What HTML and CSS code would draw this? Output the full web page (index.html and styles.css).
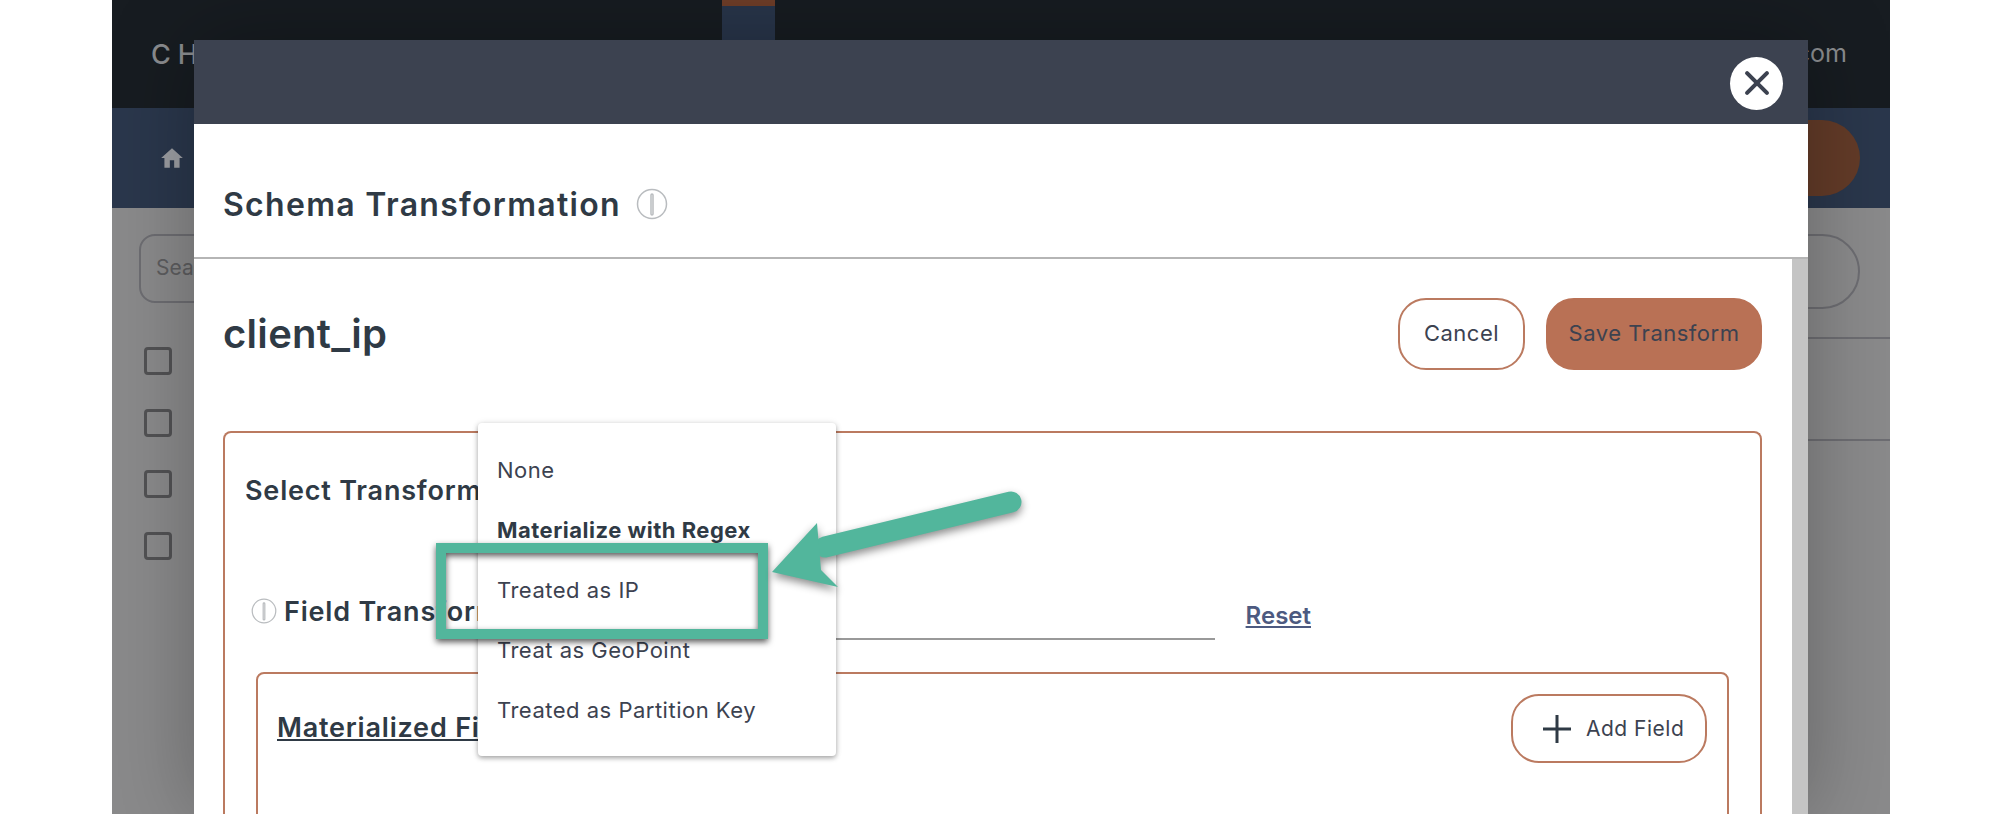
FILE: index.html
```html
<!DOCTYPE html>
<html lang="en">
<head>
    <meta charset="UTF-8">
    <title>Schema Transformation</title>
    <link rel="stylesheet" href="styles.css">
</head>
<body>
    <div class="page">
        <header class="topbar">
            <span class="brand">CHAOSSEARCH</span>
            <span class="tab-mark"></span>
            <span class="account">support@chaossearch.com</span>
        </header>
        <nav class="navbar">
            <svg class="home" viewBox="0 0 24 24"><path d="M10 21v-7h4v7h5v-9h3L12 3 2 12h3v9z"/></svg>
            <span class="nav-pill"></span>
        </nav>
        <main class="content">
            <div class="search-row">
                <div class="search">Search</div>
                <div class="search-right"></div>
            </div>
            <div class="check-row"><span class="check"></span></div>
            <div class="check-row"><span class="check"></span></div>
            <div class="check-row"><span class="check"></span></div>
            <div class="check-row"><span class="check"></span></div>
        </main>

        <section class="modal">
            <div class="modal-head">
                <button class="close">
                    <svg viewBox="0 0 24 24"><path d="M5 5l14 14M19 5L5 19"/></svg>
                </button>
            </div>
            <div class="modal-title">
                <h2>Schema Transformation</h2>
                <svg class="info info-lg" viewBox="0 0 32 32"><circle cx="16" cy="16" r="14.5"/><rect x="15" y="6" width="2" height="21" rx="1"/></svg>
            </div>
            <div class="modal-body">
                <div class="modal-scroll">
                    <div class="field-head">
                        <h1>client_ip</h1>
                        <div class="actions">
                            <button class="btn btn-cancel">Cancel</button>
                            <button class="btn btn-save">Save Transform</button>
                        </div>
                    </div>
                    <div class="panel">
                        <h3 class="select-label">Select Transformation</h3>
                        <div class="transform-row">
                            <svg class="info" viewBox="0 0 32 32"><circle cx="16" cy="16" r="14.5"/><rect x="15" y="6" width="2" height="21" rx="1"/></svg>
                            <h3>Field Transformation</h3>
                            <div class="transform-input"></div>
                            <a class="reset">Reset</a>
                        </div>
                        <div class="inner-panel">
                            <h3 class="materialized">Materialized Fields</h3>
                            <button class="btn btn-add">
                                <svg viewBox="0 0 28 28"><path d="M14 0v28M0 14h28"/></svg>
                                Add Field
                            </button>
                        </div>
                    </div>
                </div>
                <div class="scrollbar"></div>
            </div>
        </section>

        <ul class="menu">
            <li>None</li>
            <li class="selected">Materialize with Regex</li>
            <li>Treated as IP</li>
            <li>Treat as GeoPoint</li>
            <li>Treated as Partition Key</li>
        </ul>

        <div class="callout-box"></div>
        <svg class="callout-arrow" viewBox="0 0 280 120">
            <path d="M241 22L55 67"/>
            <polygon points="2,92 47,43 51,90 68,107"/>
        </svg>
    </div>
</body>
</html>
```

FILE: styles.css
```css
*{
    padding: 0;
    margin: 0;
    box-sizing: border-box;
    font-family: "Inter", "Open Sans", sans-serif;
}
body{
    background-color: #fff;
    overflow: hidden;
}
.page{
    position: relative;
    width: 1778px;
    height: 814px;
    margin-left: 112px;
    overflow: hidden;
    background-color: #8a8a8b;
}

/* page behind the modal */
.topbar{
    height: 108px;
    background-color: #171c21;
    display: flex;
    align-items: center;
    padding: 0 43px 0 39px;
    color: #8a8c8f;
}
.brand{
    width: 571px;
    font-size: 27px;
    letter-spacing: 7px;
    font-weight: 500;
}
.account{
    margin-left: auto;
    font-size: 25px;
    margin-bottom: 2px;
}
.tab-mark{
    width: 53px;
    align-self: stretch;
    background-color: #28354a;
    border-top: 6px solid #6e3d28;
}
.navbar{
    height: 100px;
    background-color: #2a374c;
    display: flex;
    justify-content: space-between;
    align-items: center;
    padding: 0 30px 0 47px;
}
.home{
    width: 26px;
    height: 26px;
    fill: #9c9ea3;
}
.nav-pill{
    width: 200px;
    height: 76px;
    border-radius: 38px;
    background-color: #633b28;
}
.content{
    padding: 26px 30px 0 27px;
    position: relative;
}
.search-row{
    display: flex;
    justify-content: space-between;
    align-items: flex-start;
    margin-bottom: 38px;
}
.search{
    width: 400px;
    height: 69px;
    border: 2px solid #6d6d72;
    border-radius: 16px;
    padding: 19px 15px;
    font-size: 21px;
    color: #5d5d5f;
}
.search-right{
    width: 300px;
    height: 75px;
    border: 2px solid #6d6d72;
    border-radius: 38px;
}
.check-row{
    height: 61.6px;
    padding-left: 5px;
}
.check{
    display: block;
    width: 28px;
    height: 28px;
    border: 3.5px solid #525254;
    border-radius: 4px;
}
.content::after{
    content: "";
    position: absolute;
    top: 129px;
    right: 0;
    width: 300px;
    height: 100px;
    border-top: 2px solid #6d6d72;
    border-bottom: 2px solid #6d6d72;
}

/* modal */
.modal{
    position: absolute;
    left: 82px;
    top: 40px;
    bottom: 0;
    width: 1614px;
    background-color: #fff;
    display: flex;
    flex-direction: column;
    box-shadow: 0 0 80px rgba(0, 0, 0, 0.28);
}
.modal-head{
    height: 84px;
    background-color: #3c4250;
    display: flex;
    justify-content: flex-end;
    align-items: center;
    padding: 2px 25px 0 0;
}
.close{
    width: 53px;
    height: 53px;
    border-radius: 50%;
    border: none;
    background-color: #fff;
    display: flex;
    align-items: center;
    justify-content: center;
}
.close svg{
    width: 34px;
    height: 34px;
    fill: none;
    stroke: #3c4250;
    stroke-width: 2.9;
    stroke-linecap: round;
}
.modal-title{
    height: 135px;
    display: flex;
    align-items: center;
    gap: 15px;
    padding: 27px 29px 0;
    border-bottom: 2px solid #b5b5b5;
}
h1, h2, h3{
    color: #2f3a45;
    font-weight: 600;
    white-space: nowrap;
}
h2{
    font-size: 32px;
    letter-spacing: 1.3px;
}
h1{
    font-size: 40px;
    letter-spacing: 0.3px;
    margin-bottom: 2px;
}
h3{
    font-size: 27px;
    letter-spacing: 0.8px;
}
.info{
    width: 26px;
    height: 26px;
    fill: none;
    stroke: #b9bcbf;
    stroke-width: 1.5;
    flex-shrink: 0;
}
.info-lg{
    width: 32px;
    height: 32px;
}
.modal-body{
    flex: 1;
    display: flex;
    overflow: hidden;
}
.modal-scroll{
    flex: 1;
    min-width: 0;
    padding: 39px 30px 0 29px;
}
.scrollbar{
    width: 16px;
    background-color: #c4c4c4;
}
.field-head{
    display: flex;
    justify-content: space-between;
    align-items: center;
}
.actions{
    display: flex;
    gap: 21px;
}
.btn{
    height: 72px;
    padding-bottom: 2px;
    background-color: #fff;
    border: 2px solid #bb7a60;
    border-radius: 28px;
    font-size: 22px;
    letter-spacing: 0.5px;
    color: #3c4250;
}
.btn-cancel{
    width: 127px;
}
.btn-save{
    width: 216px;
    background-color: #b97155;
    border-color: #b97155;
}
.panel{
    margin-top: 61px;
    border: 2px solid #bb7a60;
    border-bottom: none;
    border-radius: 8px 8px 0 0;
    padding: 40px 31px 0 31px;
    height: 400px;
}
.select-label{
    margin-left: -11px;
    line-height: 36px;
}
.transform-row{
    display: flex;
    align-items: center;
    height: 58px;
    margin-top: 73px;
}
.transform-row .info{
    margin-left: -5px;
    margin-right: 7px;
}
.transform-input{
    width: 720px;
    height: 58px;
    margin-left: auto;
    border-bottom: 2px solid #999;
}
.reset{
    margin: 8px 418px 0 31px;
    font-size: 24px;
    font-weight: 600;
    color: #4d5a80;
    text-decoration: underline;
}
.inner-panel{
    margin-top: 32px;
    height: 300px;
    border: 2px solid #bb7a60;
    border-radius: 8px 8px 0 0;
    padding: 20px 20px 0 19px;
    display: flex;
    justify-content: space-between;
    align-items: flex-start;
}
.materialized{
    margin-top: 17px;
    text-decoration: underline;
}
.btn-add{
    width: 196px;
    height: 69px;
    border-radius: 28px;
    display: flex;
    align-items: center;
    gap: 15px;
    padding: 0 12px 0 30px;
    font-size: 21px;
    white-space: nowrap;
}
.btn-add svg{
    width: 28px;
    height: 28px;
    flex-shrink: 0;
    fill: none;
    stroke: #2f3a45;
    stroke-width: 3;
}

/* dropdown over the form */
.menu{
    position: absolute;
    left: 366px;
    top: 423px;
    width: 358px;
    height: 333px;
    padding-top: 17px;
    list-style: none;
    background-color: #fff;
    border-radius: 4px;
    box-shadow: 0 2px 5px rgba(0, 0, 0, 0.35), 0 0 8px rgba(0, 0, 0, 0.06);
}
.menu li{
    height: 60px;
    line-height: 60px;
    padding-left: 19px;
    font-size: 22px;
    letter-spacing: 0.5px;
    color: #3c4250;
    white-space: nowrap;
}
.menu .selected{
    font-weight: 700;
    color: #2f3a45;
}

/* green annotation */
.callout-box{
    position: absolute;
    left: 324px;
    top: 543px;
    width: 332px;
    height: 96px;
    border: 10px solid #52b69c;
    filter: drop-shadow(0 3px 3px rgba(0, 0, 0, 0.65));
}
.callout-arrow{
    position: absolute;
    left: 658px;
    top: 480px;
    width: 280px;
    height: 120px;
    overflow: visible;
    filter: drop-shadow(0 4px 4px rgba(0, 0, 0, 0.45));
}
.callout-arrow path{
    fill: none;
    stroke: #52b69c;
    stroke-width: 21;
    stroke-linecap: round;
}
.callout-arrow polygon{
    fill: #52b69c;
}
```
